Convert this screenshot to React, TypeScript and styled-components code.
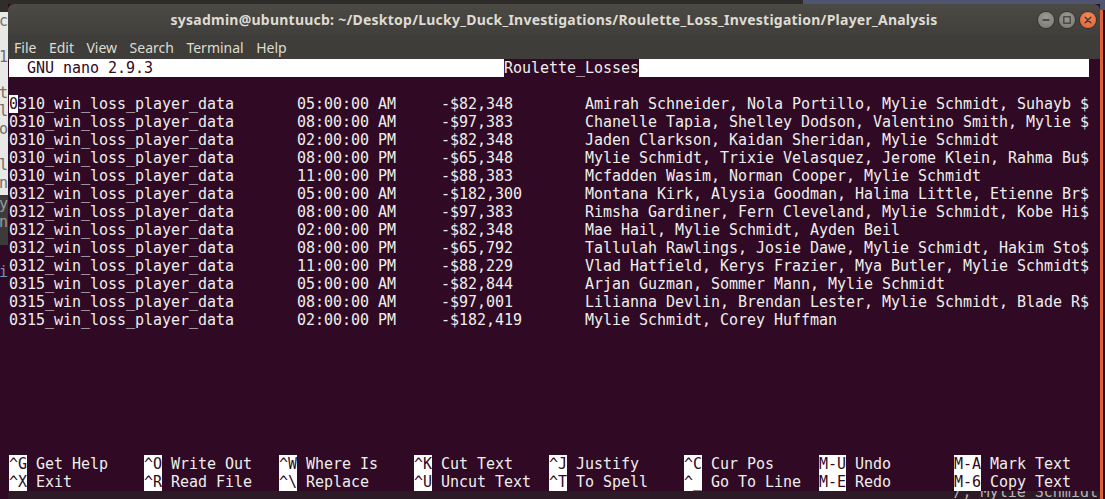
import React from "react";
import styled, { createGlobalStyle } from "styled-components";

const MONO = `"DejaVu Sans Mono", "Liberation Mono", monospace`;
const UI = `"Noto Sans", "Open Sans", sans-serif`;

const GlobalStyle = createGlobalStyle`
  html, body { margin: 0; padding: 0; background: #300a24; overflow: hidden; }
  #root { width: 1105px; height: 499px; }
`;

const Desktop = styled.div`
  width: 1105px;
  height: 499px;
  display: grid;
  grid-template-columns: 8px 1092px 5px;
  grid-template-rows: 4px 487px 8px;
  grid-template-areas:
    "left top right"
    "left win right"
    "left bottom right";
  background: #300a24;
  overflow: hidden;
`;

const TopStrip = styled.div`
  grid-area: top;
  background: linear-gradient(90deg, #2d2c29 0 795px, #4f5570 795px);
`;

const LeftStrip = styled.div`
  grid-area: left;
  display: flex;
  flex-direction: column;
  overflow: hidden;
`;

const LeftSection = styled.div<{ $bg: string; $h?: number; $color: string }>`
  background: ${(p) => p.$bg};
  color: ${(p) => p.$color};
  ${(p) => (p.$h ? `height: ${p.$h}px; flex: none;` : "flex: 1;")}
  font-family: ${MONO};
  font-size: 15px;
  line-height: 18px;
  white-space: pre;
  overflow: hidden;
  direction: rtl;
  text-align: left;
`;

const RightStrip = styled.div`
  grid-area: right;
  display: grid;
  grid-template-columns: 3px 2px;
  grid-template-rows: 10px 1fr;
`;

const RightTop = styled.div`
  grid-column: 1 / 3;
  background: #4f5570;
`;

const OrangeEdge = styled.div`
  background: #d9623a;
`;

const RightFill = styled.div`
  background: #2e0c24;
`;

const BottomStrip = styled.div`
  grid-area: bottom;
  background: #2c1a26;
  overflow: hidden;
  display: flex;
  justify-content: flex-end;
  align-items: flex-start;
`;

const BottomText = styled.div`
  font-family: ${MONO};
  font-size: 15px;
  line-height: 2px;
  height: 2px;
  color: #b9b3b7;
  white-space: pre;
  margin-right: 2px;
`;

const Window = styled.div`
  grid-area: win;
  display: flex;
  flex-direction: column;
  background: #300a24;
`;

const TitleBar = styled.div`
  height: 31px;
  flex: none;
  border-radius: 6px 6px 0 0;
  background: linear-gradient(#4b4a45, #403f3b);
  display: grid;
  grid-template-columns: 1fr auto 1fr;
  align-items: center;
`;

const Title = styled.div`
  grid-column: 2;
  font-family: ${UI};
  font-weight: 700;
  font-size: 14px;
  letter-spacing: 0.24px;
  color: #dfdbd2;
  white-space: nowrap;
`;

const Controls = styled.div`
  grid-column: 3;
  justify-self: end;
  display: flex;
  gap: 5px;
  padding-right: 4px;
`;

const Btn = styled.div<{ $close?: boolean }>`
  width: 16px;
  height: 16px;
  border-radius: 50%;
  display: flex;
  align-items: center;
  justify-content: center;
  background: ${(p) =>
    p.$close
      ? "radial-gradient(circle at 50% 35%, #f58a5e, #e3602f)"
      : "radial-gradient(circle at 50% 35%, #9b9a94, #77766f)"};
  box-shadow: 0 0 0 1px rgba(0, 0, 0, 0.25);
`;

const MenuBar = styled.div`
  height: 24px;
  flex: none;
  background: #3e3d39;
  display: flex;
  align-items: center;
  gap: 12.5px;
  padding-left: 6px;
  font-family: ${UI};
  font-size: 14px;
  color: #dfdbd2;
`;

const MenuItem = styled.span``;

const Terminal = styled.div`
  height: 432px;
  flex: none;
  padding-left: 1px;
  display: flex;
  flex-direction: column;
  background: #300a24;
  color: #eeeeec;
  font-family: ${MONO};
  font-size: 15px;
  letter-spacing: -0.03px;
  line-height: 18px;
  white-space: pre;
`;

const Header = styled.div`
  width: 1080px;
  height: 18px;
  flex: none;
  display: grid;
  grid-template-columns: 495px 135px 1fr;
  background: #ffffff;
  color: #300a24;
`;

const HeaderFile = styled.span`
  background: #300a24;
  color: #eeeeec;
`;

const Line = styled.div`
  height: 18px;
  flex: none;
`;

const DataRow = styled.div`
  height: 18px;
  flex: none;
  display: grid;
  grid-template-columns: 288px 144px 144px 504px;
`;

const Cursor = styled.span`
  background: #ffffff;
  color: #300a24;
`;

const Spacer = styled.div`
  flex: 1;
`;

const Shortcuts = styled.div`
  display: grid;
  grid-template-columns: repeat(8, 135px);
  grid-auto-rows: 18px;
  flex: none;
`;

const Shortcut = styled.div``;

const Key = styled.span`
  background: #ffffff;
  color: #300a24;
`;

const rows: [string, string, string, string][] = [
  ["0310_win_loss_player_data", "05:00:00 AM", "-$82,348", "Amirah Schneider, Nola Portillo, Mylie Schmidt, Suhayb $"],
  ["0310_win_loss_player_data", "08:00:00 AM", "-$97,383", "Chanelle Tapia, Shelley Dodson, Valentino Smith, Mylie $"],
  ["0310_win_loss_player_data", "02:00:00 PM", "-$82,348", "Jaden Clarkson, Kaidan Sheridan, Mylie Schmidt"],
  ["0310_win_loss_player_data", "08:00:00 PM", "-$65,348", "Mylie Schmidt, Trixie Velasquez, Jerome Klein, Rahma Bu$"],
  ["0310_win_loss_player_data", "11:00:00 PM", "-$88,383", "Mcfadden Wasim, Norman Cooper, Mylie Schmidt"],
  ["0312_win_loss_player_data", "05:00:00 AM", "-$182,300", "Montana Kirk, Alysia Goodman, Halima Little, Etienne Br$"],
  ["0312_win_loss_player_data", "08:00:00 AM", "-$97,383", "Rimsha Gardiner, Fern Cleveland, Mylie Schmidt, Kobe Hi$"],
  ["0312_win_loss_player_data", "02:00:00 PM", "-$82,348", "Mae Hail, Mylie Schmidt, Ayden Beil"],
  ["0312_win_loss_player_data", "08:00:00 PM", "-$65,792", "Tallulah Rawlings, Josie Dawe, Mylie Schmidt, Hakim Sto$"],
  ["0312_win_loss_player_data", "11:00:00 PM", "-$88,229", "Vlad Hatfield, Kerys Frazier, Mya Butler, Mylie Schmidt$"],
  ["0315_win_loss_player_data", "05:00:00 AM", "-$82,844", "Arjan Guzman, Sommer Mann, Mylie Schmidt"],
  ["0315_win_loss_player_data", "08:00:00 AM", "-$97,001", "Lilianna Devlin, Brendan Lester, Mylie Schmidt, Blade R$"],
  ["0315_win_loss_player_data", "02:00:00 PM", "-$182,419", "Mylie Schmidt, Corey Huffman"],
];

const shortcuts: [string, string][] = [
  ["^G", "Get Help"],
  ["^O", "Write Out"],
  ["^W", "Where Is"],
  ["^K", "Cut Text"],
  ["^J", "Justify"],
  ["^C", "Cur Pos"],
  ["M-U", "Undo"],
  ["M-A", "Mark Text"],
  ["^X", "Exit"],
  ["^R", "Read File"],
  ["^\\", "Replace"],
  ["^U", "Uncut Text"],
  ["^T", "To Spell"],
  ["^_", "Go To Line"],
  ["M-E", "Redo"],
  ["M-6", "Copy Text"],
];

const MinIcon = () => (
  <svg width="8" height="8" viewBox="0 0 8 8">
    <rect x="0.5" y="3.2" width="7" height="1.6" fill="#3c3b37" />
  </svg>
);

const MaxIcon = () => (
  <svg width="8" height="8" viewBox="0 0 8 8">
    <rect x="0.8" y="0.8" width="6.4" height="6.4" fill="none" stroke="#3c3b37" strokeWidth="1.2" />
  </svg>
);

const CloseIcon = () => (
  <svg width="8" height="8" viewBox="0 0 8 8">
    <path d="M1.2 1.2 L6.8 6.8 M6.8 1.2 L1.2 6.8" stroke="#3c3b37" strokeWidth="1.5" strokeLinecap="round" />
  </svg>
);

export default function App() {
  return (
    <>
      <GlobalStyle />
      <Desktop>
        <LeftStrip>
          <LeftSection $bg="#2f2e2b" $color="#888" $h={12} />
          <LeftSection $bg="#e8e8e7" $color="#6e6e6e" $h={183}>
            {"c\n\n1\n\nt\nl\no\n\nl\nn"}
          </LeftSection>
          <LeftSection $bg="#3d3b3a" $color="#9a9a9a" $h={50}>
            {"sy\nn"}
          </LeftSection>
          <LeftSection $bg="#300a24" $color="#7f8fb0">
            {"\nxi"}
          </LeftSection>
        </LeftStrip>
        <TopStrip />
        <Window>
          <TitleBar>
            <Title>sysadmin@ubuntuucb: ~/Desktop/Lucky_Duck_Investigations/Roulette_Loss_Investigation/Player_Analysis</Title>
            <Controls>
              <Btn><MinIcon /></Btn>
              <Btn><MaxIcon /></Btn>
              <Btn $close><CloseIcon /></Btn>
            </Controls>
          </TitleBar>
          <MenuBar>
            {["File", "Edit", "View", "Search", "Terminal", "Help"].map((m) => (
              <MenuItem key={m}>{m}</MenuItem>
            ))}
          </MenuBar>
          <Terminal>
            <Header>
              <span>{"  GNU nano 2.9.3"}</span>
              <HeaderFile>Roulette_Losses</HeaderFile>
              <span />
            </Header>
            <Line />
            {rows.map((r, i) => (
              <DataRow key={i}>
                <span>
                  {i === 0 ? (
                    <>
                      <Cursor>{r[0][0]}</Cursor>
                      {r[0].slice(1)}
                    </>
                  ) : (
                    r[0]
                  )}
                </span>
                <span>{r[1]}</span>
                <span>{r[2]}</span>
                <span>{r[3]}</span>
              </DataRow>
            ))}
            <Spacer />
            <Line />
            <Shortcuts>
              {shortcuts.map(([k, l]) => (
                <Shortcut key={k}>
                  <Key>{k}</Key> {l}
                </Shortcut>
              ))}
            </Shortcuts>
          </Terminal>
        </Window>
        <RightStrip>
          <RightTop />
          <OrangeEdge />
          <RightFill />
        </RightStrip>
        <BottomStrip>
          <BottomText>{"/, Mylie Schmidt"}</BottomText>
        </BottomStrip>
      </Desktop>
    </>
  );
}
